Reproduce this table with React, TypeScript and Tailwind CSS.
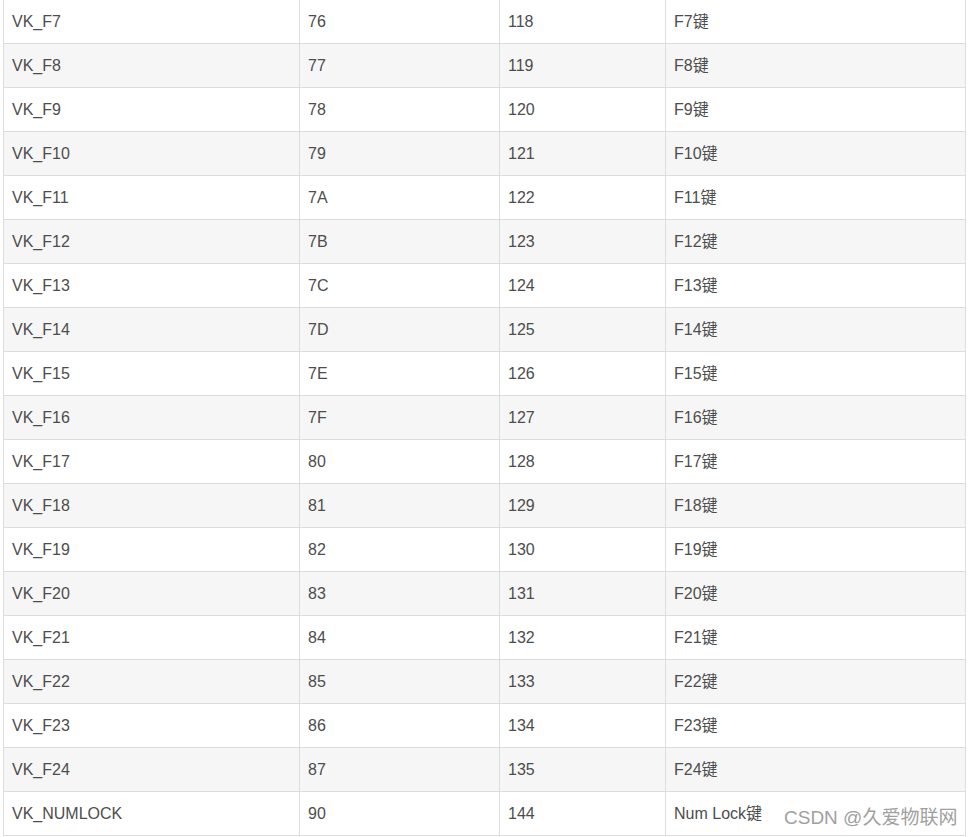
import React from 'react';

const rows: [string, string, string, string][] = [
  ['VK_F7', '76', '118', 'F7键'],
  ['VK_F8', '77', '119', 'F8键'],
  ['VK_F9', '78', '120', 'F9键'],
  ['VK_F10', '79', '121', 'F10键'],
  ['VK_F11', '7A', '122', 'F11键'],
  ['VK_F12', '7B', '123', 'F12键'],
  ['VK_F13', '7C', '124', 'F13键'],
  ['VK_F14', '7D', '125', 'F14键'],
  ['VK_F15', '7E', '126', 'F15键'],
  ['VK_F16', '7F', '127', 'F16键'],
  ['VK_F17', '80', '128', 'F17键'],
  ['VK_F18', '81', '129', 'F18键'],
  ['VK_F19', '82', '130', 'F19键'],
  ['VK_F20', '83', '131', 'F20键'],
  ['VK_F21', '84', '132', 'F21键'],
  ['VK_F22', '85', '133', 'F22键'],
  ['VK_F23', '86', '134', 'F23键'],
  ['VK_F24', '87', '135', 'F24键'],
  ['VK_NUMLOCK', '90', '144', 'Num Lock键'],
];

export default function App() {
  return (
    <div
      className="relative h-[837px] w-[970px] overflow-hidden bg-white pl-[3px] text-[#4d4d4d]"
      style={{ fontFamily: '"Liberation Sans", Arial, "Noto Sans CJK SC", sans-serif' }}
    >
      <table className="-mt-px w-[962px] table-fixed border-collapse text-[16px]">
        <colgroup>
          <col className="w-[296px]" />
          <col className="w-[200px]" />
          <col className="w-[166px]" />
          <col className="w-[300px]" />
        </colgroup>
        <tbody>
          {rows.map((r, i) => (
            <tr key={r[0]} className={i % 2 === 1 ? 'bg-[#f6f6f6]' : 'bg-white'}>
              {r.map((c, j) => (
                <td key={j} className="h-[44px] border border-[#dddddd] px-2 align-middle leading-[22px]">
                  {c}
                </td>
              ))}
            </tr>
          ))}
        </tbody>
      </table>
      <div className="absolute left-[784px] top-[805px] text-[19px] leading-[26px] text-[#a0a0a0]">
        CSDN @久爱物联网
      </div>
    </div>
  );
}
